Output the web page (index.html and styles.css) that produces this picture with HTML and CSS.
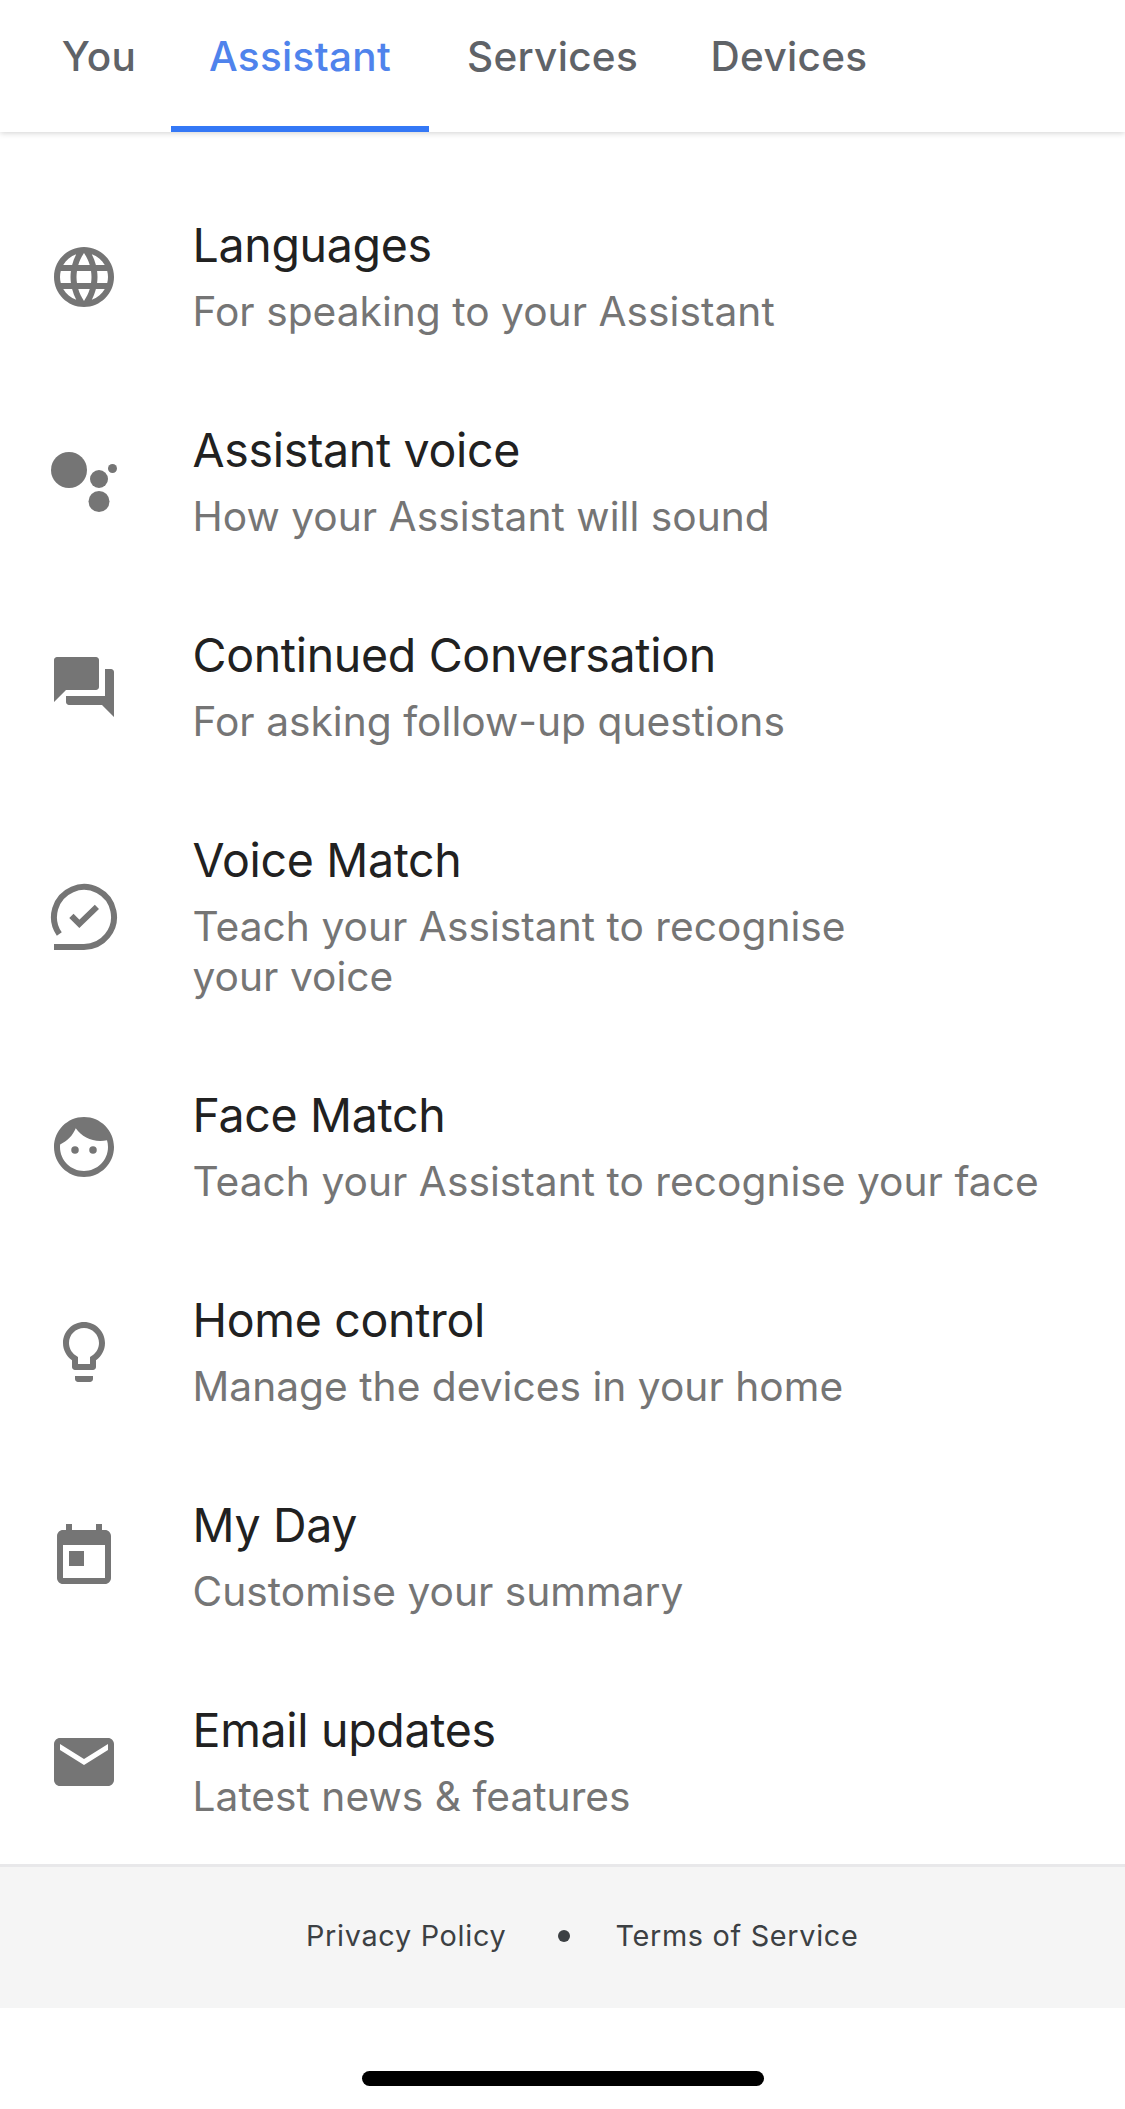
FILE: index.html
```html
<!DOCTYPE html>
<html lang="en">
<head>
	<meta charset="UTF-8">
	<title>Assistant</title>
	<link rel="stylesheet" href="styles.css">
</head>
<body>
	<nav class="tabs">
		<div class="tab you">You</div>
		<div class="tab assistant active">Assistant</div>
		<div class="tab services">Services</div>
		<div class="tab devices">Devices</div>
	</nav>

	<main class="settings">
		<div class="item">
			<svg class="icon" viewBox="0 0 24 24"><path d="M11.99 2C6.47 2 2 6.48 2 12s4.47 10 9.99 10C17.52 22 22 17.52 22 12S17.52 2 11.99 2zm6.93 6h-2.95c-.32-1.25-.78-2.45-1.38-3.56 1.84.63 3.37 1.91 4.33 3.56zM12 4.04c.83 1.2 1.48 2.53 1.91 3.96h-3.82c.43-1.43 1.08-2.76 1.91-3.96zM4.26 14C4.1 13.36 4 12.69 4 12s.1-1.36.26-2h3.38c-.08.66-.14 1.32-.14 2s.06 1.34.14 2H4.26zm.82 2h2.95c.32 1.25.78 2.45 1.38 3.56-1.84-.63-3.37-1.9-4.33-3.56zm2.95-8H5.08c.96-1.66 2.49-2.93 4.33-3.56C8.81 5.55 8.35 6.75 8.03 8zM12 19.96c-.83-1.2-1.48-2.53-1.91-3.96h3.82c-.43 1.43-1.08 2.76-1.91 3.96zM14.34 14H9.66c-.09-.66-.16-1.32-.16-2s.07-1.35.16-2h4.68c.09.65.16 1.32.16 2s-.07 1.34-.16 2zm.25 5.56c.6-1.11 1.06-2.31 1.38-3.56h2.95c-.96 1.65-2.49 2.93-4.33 3.56zM16.36 14c.08-.66.14-1.32.14-2s-.06-1.34-.14-2h3.38c.16.64.26 1.31.26 2s-.1 1.36-.26 2h-3.38z"/></svg>
			<div class="text">
				<div class="title">Languages</div>
				<div class="message">For speaking to your Assistant</div>
			</div>
		</div>
		<div class="item">
			<svg class="icon" viewBox="0 0 24 24"><circle cx="7" cy="8" r="6"/><circle cx="17" cy="11" r="3"/><circle cx="21.5" cy="7.5" r="1.5"/><circle cx="17" cy="18.5" r="3.5"/></svg>
			<div class="text">
				<div class="title">Assistant voice</div>
				<div class="message">How your Assistant will sound</div>
			</div>
		</div>
		<div class="item">
			<svg class="icon" viewBox="0 0 24 24"><path d="M21 6h-2v9H6v2c0 .55.45 1 1 1h11l4 4V7c0-.55-.45-1-1-1zm-4 6V3c0-.55-.45-1-1-1H3c-.55 0-1 .45-1 1v14l4-4h10c.55 0 1-.45 1-1z"/></svg>
			<div class="text">
				<div class="title">Continued Conversation</div>
				<div class="message">For asking follow-up questions</div>
			</div>
		</div>
		<div class="item">
			<svg class="icon outline" viewBox="0 0 24 24"><path d="M3.77 17.68A10 10 0 1 1 12 22H2"/><path d="M7.8 11.65l2.65 2.65 5.85-5.7"/></svg>
			<div class="text">
				<div class="title">Voice Match</div>
				<div class="message">Teach your Assistant to recognise<br>your voice</div>
			</div>
		</div>
		<div class="item">
			<svg class="icon" viewBox="0 0 24 24"><circle cx="9" cy="13" r="1.25"/><circle cx="15" cy="13" r="1.25"/><path d="M12 2C6.48 2 2 6.48 2 12s4.48 10 10 10 10-4.48 10-10S17.52 2 12 2zm0 18c-4.41 0-8-3.59-8-8 0-.29.02-.58.05-.86 2.36-1.05 4.23-2.98 5.21-5.37C11.07 8.33 14.05 10 17.42 10c.78 0 1.53-.09 2.25-.26.21.71.33 1.47.33 2.26 0 4.41-3.59 8-8 8z"/></svg>
			<div class="text">
				<div class="title">Face Match</div>
				<div class="message">Teach your Assistant to recognise your face</div>
			</div>
		</div>
		<div class="item">
			<svg class="icon" viewBox="0 0 24 24"><path d="M9 21c0 .55.45 1 1 1h4c.55 0 1-.45 1-1v-1H9v1zm3-19C8.14 2 5 5.14 5 9c0 2.38 1.19 4.47 3 5.74V17c0 .55.45 1 1 1h6c.55 0 1-.45 1-1v-2.26c1.81-1.27 3-3.36 3-5.74 0-3.86-3.14-7-7-7zm2.85 11.1l-.85.6V16h-4v-2.3l-.85-.6C7.8 12.16 7 10.63 7 9c0-2.76 2.24-5 5-5s5 2.24 5 5c0 1.63-.8 3.16-2.15 4.1z"/></svg>
			<div class="text">
				<div class="title">Home control</div>
				<div class="message">Manage the devices in your home</div>
			</div>
		</div>
		<div class="item">
			<svg class="icon" viewBox="0 0 24 24"><path d="M19 3h-1V1h-2v2H8V1H6v2H5c-1.11 0-1.99.9-1.99 2L3 19c0 1.1.89 2 2 2h14c1.1 0 2-.9 2-2V5c0-1.1-.9-2-2-2zm0 16H5V8h14v11zM7 10h5v5H7z"/></svg>
			<div class="text">
				<div class="title">My Day</div>
				<div class="message">Customise your summary</div>
			</div>
		</div>
		<div class="item">
			<svg class="icon" viewBox="0 0 24 24"><path d="M20 4H4c-1.1 0-1.99.9-1.99 2L2 18c0 1.1.9 2 2 2h16c1.1 0 2-.9 2-2V6c0-1.1-.9-2-2-2zm0 4l-8 5-8-5V6l8 5 8-5v2z"/></svg>
			<div class="text">
				<div class="title">Email updates</div>
				<div class="message">Latest news &amp; features</div>
			</div>
		</div>
	</main>

	<footer class="footer">
		<span>Privacy Policy</span>
		<span class="dot"></span>
		<span>Terms of Service</span>
	</footer>
	<div class="homeBar"></div>
</body>
</html>
```
FILE: styles.css
```css
* {
	box-sizing: border-box;
}
html, body {
	margin: 0;
	padding: 0;
}
body {
	font-family: Inter, "Liberation Sans", sans-serif;
	background: #fff;
	height: 2109px;
	overflow: hidden;
}
.tabs {
	display: flex;
	height: 132px;
	padding-left: 27px;
	box-shadow: 0 1px 6px rgba(0, 0, 0, 0.18);
}
.tab {
	padding-top: 32px;
	font-size: 40.5px;
	font-weight: 500;
	line-height: 50px;
	letter-spacing: 0.3px;
	text-align: center;
	color: #5f6368;
}
.tab.active {
	color: #4f83ec;
	border-bottom: 6px solid #3478f6;
}
.you {
	width: 144px;
}
.assistant {
	width: 258px;
}
.services {
	width: 247px;
}
.devices {
	width: 226px;
}
.settings {
	height: 1732px;
	padding-top: 43px;
}
.item {
	display: flex;
	align-items: center;
	padding: 0 48px;
}
.icon {
	flex: none;
	width: 72px;
	height: 72px;
	margin: 0 72.5px 1px 0;
	fill: #757575;
}
.icon.outline {
	fill: none;
	stroke: #757575;
	stroke-width: 2;
}
.text {
	padding: 40px 0 43px;
	white-space: nowrap;
}
.title {
	font-size: 46.5px;
	line-height: 60px;
	letter-spacing: -0.32px;
	color: #212121;
}
.message {
	margin-top: 12px;
	font-size: 40.7px;
	line-height: 50px;
	letter-spacing: 0.02px;
	color: #757575;
}
.footer {
	display: flex;
	align-items: center;
	height: 144px;
	padding: 0 0 3px 306px;
	border-top: 3px solid #e8e8ea;
	background: #f5f5f5;
	color: #3c4043;
	font-size: 28.8px;
	line-height: 40px;
	letter-spacing: 0.7px;
}
.dot {
	width: 12px;
	height: 12px;
	margin: 0 45.5px 0 51.5px;
	border-radius: 50%;
	background: #3c4043;
}
.homeBar {
	width: 402px;
	height: 15px;
	margin: 63px auto 0;
	border-radius: 8px;
	background: #000;
}
```
